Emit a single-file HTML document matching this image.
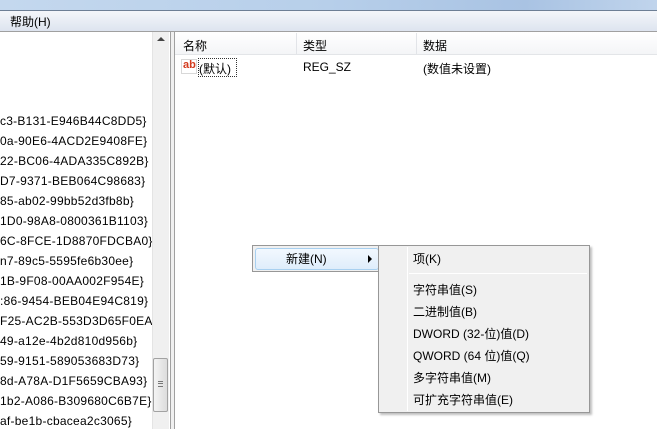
<!DOCTYPE html><html><head><meta charset="utf-8"><style>
*{margin:0;padding:0;box-sizing:border-box}
body{width:657px;height:429px;overflow:hidden;background:#fff;font-family:"Liberation Sans","Noto Sans CJK SC",sans-serif;font-size:12px;color:#000;position:relative}
.a{position:absolute;white-space:nowrap}
</style></head><body>
<div class="a" style="left:0;top:0;width:657px;height:10px;background:linear-gradient(90deg,#c4d8ee,#b7cfea 50%,#a9c3e3 80%,#c0d4ec)"></div>
<div class="a" style="left:0;top:10px;width:657px;height:1px;background:#6d7f95"></div>
<div class="a" style="left:0;top:11px;width:657px;height:20px;background:linear-gradient(#f4f6fa,#dde4ef)"></div>
<div class="a" style="left:10px;top:13px">帮助(H)</div>
<div class="a" style="left:0;top:31px;width:657px;height:1px;background:#a0a0a0"></div>
<div class="a" style="left:0;top:32px;width:170px;height:397px;background:#fff"></div>
<div class="a" style="left:0;top:111px;line-height:20px;letter-spacing:0.25px">
<div>c3-B131-E946B44C8DD5}</div><div>0a-90E6-4ACD2E9408FE}</div><div>22-BC06-4ADA335C892B}</div><div>D7-9371-BEB064C98683}</div><div>85-ab02-99bb52d3fb8b}</div><div>1D0-98A8-0800361B1103}</div><div>6C-8FCE-1D8870FDCBA0}</div><div>n7-89c5-5595fe6b30ee}</div><div>1B-9F08-00AA002F954E}</div><div>:86-9454-BEB04E94C819}</div><div>F25-AC2B-553D3D65F0EA}</div><div>49-a12e-4b2d810d956b}</div><div>59-9151-589053683D73}</div><div>8d-A78A-D1F5659CBA93}</div><div>1b2-A086-B309680C6B7E}</div><div>af-be1b-cbacea2c3065}</div>
</div>
<div class="a" style="left:152px;top:32px;width:17px;height:397px;background:#f0f0f0;border-left:1px solid #e4e4e4"></div>
<div class="a" style="left:157px;top:37px;width:0;height:0;border-left:4px solid transparent;border-right:4px solid transparent;border-bottom:4px solid #444"></div>
<div class="a" style="left:153px;top:358px;width:15px;height:54px;border:1px solid #a2a2a2;border-radius:2px;background:linear-gradient(90deg,#f4f4f4,#dcdcdc)"></div>
<div class="a" style="left:158px;top:381px;width:5px;height:6px;border-top:1px solid #777;border-bottom:1px solid #777"><div style="margin-top:1px;border-top:1px solid #777"></div></div>
<div class="a" style="left:170px;top:32px;width:5px;height:397px;background:#f0f0f0;border-left:1px solid #a0a0a0;border-right:1px solid #a0a0a0"></div>
<div class="a" style="left:175px;top:32px;width:482px;height:23px;background:linear-gradient(#fff,#f4f5f7);border-bottom:1px solid #e3e5e8"></div>
<div class="a" style="left:296px;top:33px;width:1px;height:21px;background:#e2e4e8"></div>
<div class="a" style="left:416px;top:33px;width:1px;height:21px;background:#e2e4e8"></div>
<div class="a" style="left:183px;top:37px">名称</div>
<div class="a" style="left:303px;top:37px">类型</div>
<div class="a" style="left:423px;top:37px">数据</div>
<div class="a" style="left:181px;top:59px;width:16px;height:15px;background:#fff;border:1px solid #d8d8d8;color:#d33b1e;font-weight:bold;font-size:11px;line-height:11px;padding-left:1px">ab</div>
<div class="a" style="left:198px;top:58px;width:39px;height:19px;border:1px dotted #333"></div>
<div class="a" style="left:199px;top:60px">(默认)</div>
<div class="a" style="left:303px;top:60px">REG_SZ</div>
<div class="a" style="left:423px;top:60px">(数值未设置)</div>
<div class="a" style="left:252px;top:245px;width:128px;height:27px;background:#f0f0f0;border:1px solid #979797"></div>
<div class="a" style="left:255px;top:248px;width:124px;height:22px;border:1px solid #a8d0f0;border-radius:3px;background:linear-gradient(#f2f8fe,#dfedfb)"></div>
<div class="a" style="left:286px;top:250px">新建(N)</div>
<div class="a" style="left:368px;top:255px;width:0;height:0;border-top:4px solid transparent;border-bottom:4px solid transparent;border-left:4px solid #000"></div>
<div class="a" style="left:378px;top:245px;width:212px;height:168px;background:#f0f0f0;border:1px solid #979797;box-shadow:2px 2px 2px rgba(0,0,0,.25)"></div>
<div class="a" style="left:407px;top:247px;width:1px;height:164px;background:#e2e3e3;border-right:1px solid #fff"></div>
<div class="a" style="left:409px;top:273px;width:178px;height:1px;background:#e0e0e0;border-bottom:1px solid #fff"></div>
<div class="a" style="left:413px;top:250px">项(K)</div>
<div class="a" style="left:413px;top:279px;line-height:22px">
<div>字符串值(S)</div><div>二进制值(B)</div><div>DWORD (32-位)值(D)</div><div>QWORD (64 位)值(Q)</div><div>多字符串值(M)</div><div>可扩充字符串值(E)</div>
</div>
</body></html>
